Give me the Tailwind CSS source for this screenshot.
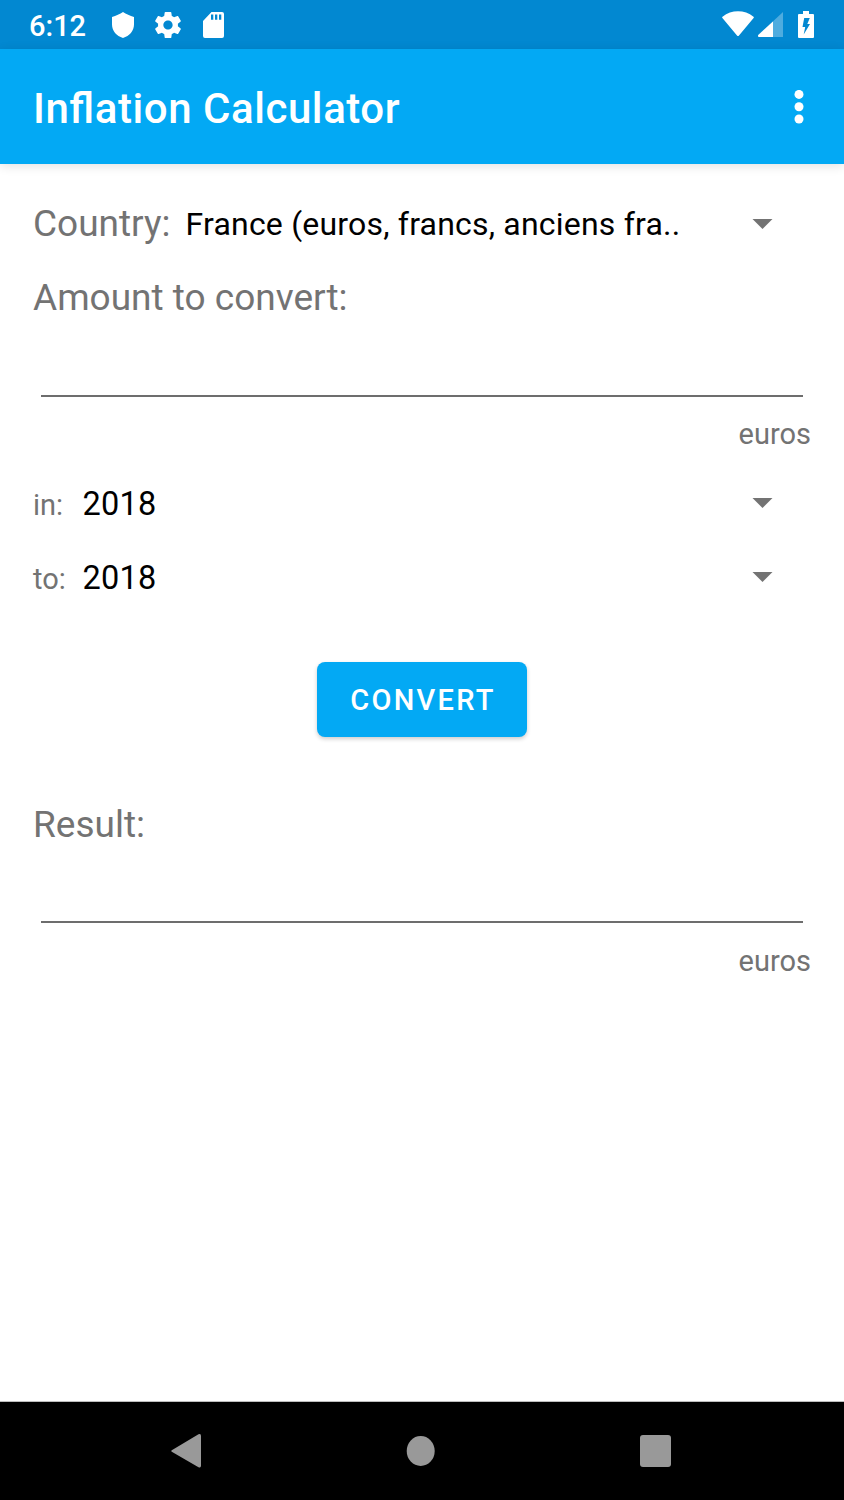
<!DOCTYPE html>
<html lang="en">
<head>
<meta charset="utf-8">
<title>Inflation Calculator</title>
<script src="https://cdn.jsdelivr.net/npm/@tailwindcss/browser@4"></script>
</head>
<body class="bg-white">
<div class="flex h-[1500px] w-[844px] flex-col overflow-hidden bg-white font-['Roboto',sans-serif]">
  <!-- Status bar -->
  <div class="flex h-[49px] shrink-0 items-start justify-between bg-[#0288d1] pl-[29px] pr-[30px] text-white">
    <div class="flex">
      <span class="w-[83px] whitespace-nowrap pt-[2px] text-[29px] font-medium leading-[48px]">6:12</span>
      <svg class="mt-3 h-[26px] w-[22px]" viewBox="0 0 22 26" fill="currentColor"><path d="M11 0C8 2.200 4 3.600 0 5v7.500C0 19 4.500 24 11 26c6.500-2 11-7 11-13.500V5C18 3.600 14 2.200 11 0z"/></svg>
      <svg class="ml-[21px] mt-3 h-[26px] w-[26px]" viewBox="2.200 2 19.600 20" preserveAspectRatio="none" fill="currentColor"><path d="M19.430 12.980c.040-.320.070-.640.070-.980s-.030-.660-.070-.980l2.110-1.650c.190-.150.240-.420.120-.640l-2-3.460c-.120-.220-.390-.300-.610-.220l-2.490 1c-.520-.400-1.080-.730-1.690-.980l-.380-2.650C14.460 2.180 14.250 2 14 2h-4c-.250 0-.460.180-.490.420l-.380 2.650c-.610.250-1.170.590-1.690.980l-2.490-1c-.230-.090-.490 0-.610.220l-2 3.460c-.130.220-.070.490.120.640l2.110 1.650c-.040.320-.070.650-.070.980s.030.660.070.980l-2.110 1.650c-.190.150-.240.420-.120.640l2 3.460c.120.220.390.300.610.220l2.490-1c.520.400 1.080.730 1.690.980l.380 2.650c.030.240.240.420.490.420h4c.250 0 .460-.180.490-.420l.380-2.650c.610-.250 1.170-.590 1.690-.980l2.490 1c.230.090.490 0 .610-.220l2-3.460c.120-.220.070-.490-.120-.640l-2.110-1.650zM12 15.500c-1.930 0-3.500-1.570-3.500-3.500s1.570-3.500 3.500-3.500 3.500 1.570 3.500 3.500-1.570 3.500-3.500 3.500z"/></svg>
      <svg class="ml-[22px] mt-3 h-[26px] w-[21px]" viewBox="0 0 21 26" fill="currentColor"><path fill-rule="evenodd" d="M8.500 0H19q2 0 2 2v22q0 2-2 2H2q-2 0-2-2V9zM8 2.500v5.300h2.300V2.500zm4 0v5.300h2.300V2.500zm4 0v5.300h2.300V2.500z"/></svg>
    </div>
    <div class="flex">
      <svg class="mt-[11px] h-[25px] w-[32px]" viewBox="0 0 32 25" fill="currentColor"><path d="M.5 5.700C5 2 10.500.2 16 .2s11 1.800 15.500 5.500c.500.400.500.800.100 1.300L17 24.400c-.600.700-1.400.700-2 0L.4 7C0 6.500 0 6.100.5 5.700z"/></svg>
      <svg class="ml-1 mt-3 h-[25px] w-[25px]" viewBox="0 0 25 25" fill="currentColor"><path fill-opacity=".3" d="M25 0v25H1.500c-1.500 0-2-1.300-1-2.300z"/><path d="M15 9.500V25H1.500c-1.500 0-2-1.300-1-2.300z"/></svg>
      <svg class="ml-[15px] mt-[11px] h-[27px] w-[16px]" viewBox="0 0 16 27" fill="currentColor"><path fill-rule="evenodd" d="M5 0h6v3h4q1 0 1 1v22q0 1-1 1H1q-1 0-1-1V4q0-1 1-1h4zM6.200 7 4.500 16h2.700l-1.500 7.500 6.300-10.500H9.300l2.500-6z"/></svg>
    </div>
  </div>
  <!-- App bar -->
  <header class="z-10 flex h-[115px] shrink-0 items-center justify-between bg-[#03a9f4] pl-[33px] pr-[40px] text-white shadow-[0_2px_10px_rgba(0,0,0,0.12)]">
    <h1 class="pt-[5px] text-[42px] font-medium leading-[48px] tracking-[0.550px] [font-feature-settings:'liga'_1]">Inflation Calculator</h1>
    <svg class="h-[34px] w-[10px]" viewBox="0 0 10 34" fill="currentColor"><circle cx="5" cy="4.400" r="4.500"/><circle cx="5" cy="16.700" r="4.500"/><circle cx="5" cy="29" r="4.500"/></svg>
  </header>
  <!-- Conversion form -->
  <main class="flex grow flex-col px-[33px] pt-[35px] text-[#737373]">
    <div class="flex h-[49px] items-center pr-[38px]">
      <span class="w-[152.500px] whitespace-nowrap text-[37px] leading-[49px]">Country:</span>
      <span class="grow whitespace-nowrap pt-[2px] text-[32px] leading-[47px] tracking-[0.2px] text-black">France (euros, francs, anciens fra..</span>
      <svg class="h-[10px] w-[21px]" viewBox="0 0 21 10" fill="#737373"><path d="M.5 0h20l-10 10z"/></svg>
    </div>
    <label class="mt-7 text-[37px] leading-[43px]">Amount to convert:</label>
    <div class="mx-2 mt-[76px] h-[2px] bg-[#6d6d6d]"></div>
    <span class="mt-5 self-end text-[29px] leading-[34px]">euros</span>
    <div class="mt-7 flex h-[49px] items-center pr-[38px]">
      <span class="w-[49.500px] pt-[3px] text-[29px] leading-[46px]">in:</span>
      <span class="grow pt-[2px] text-[32.500px] leading-[49px] tracking-[0.2px] text-black">2018</span>
      <svg class="mb-[2px] h-[10px] w-[21px]" viewBox="0 0 21 10" fill="#737373"><path d="M.5 0h20l-10 10z"/></svg>
    </div>
    <div class="mt-[25px] flex h-[49px] items-center pr-[38px]">
      <span class="w-[49.500px] pt-[3px] text-[29px] leading-[46px]">to:</span>
      <span class="grow pt-[2px] text-[32.500px] leading-[49px] tracking-[0.2px] text-black">2018</span>
      <svg class="mb-[2px] h-[10px] w-[21px]" viewBox="0 0 21 10" fill="#737373"><path d="M.5 0h20l-10 10z"/></svg>
    </div>
    <button class="mt-[60px] h-[75px] w-[210px] self-center rounded-[8px] bg-[#03a9f4] pl-[2px] pt-[2px] text-[29px] font-medium leading-[73px] tracking-[2.300px] text-white shadow-[0_2px_4px_rgba(0,0,0,0.2)]">CONVERT</button>
    <label class="mt-[66px] text-[37px] leading-[43px]">Result:</label>
    <div class="mx-2 mt-[75px] h-[2px] bg-[#6d6d6d]"></div>
    <span class="mt-[21px] self-end text-[29px] leading-[34px]">euros</span>
  </main>
  <!-- Navigation bar -->
  <nav class="flex h-[99px] shrink-0 items-center justify-between border-t border-[#bdbdbd] bg-black pl-[171px] pr-[173.500px]">
    <svg class="h-[36px] w-[31px]" viewBox="0 0 31 36" fill="#999"><path d="M1.200 17 27.500 1.300q2.500-1.200 2.500 1.700v29.500q0 2.900-2.500 1.700L1.200 19q-2-1 0-2z"/></svg>
    <svg class="h-[31px] w-[29px]" viewBox="0 0 29 31" fill="#999"><ellipse cx="14.700" cy="15" rx="14" ry="15"/></svg>
    <div class="h-[32px] w-[31px] rounded-[3px] bg-[#999]"></div>
  </nav>
</div>
</body>
</html>
